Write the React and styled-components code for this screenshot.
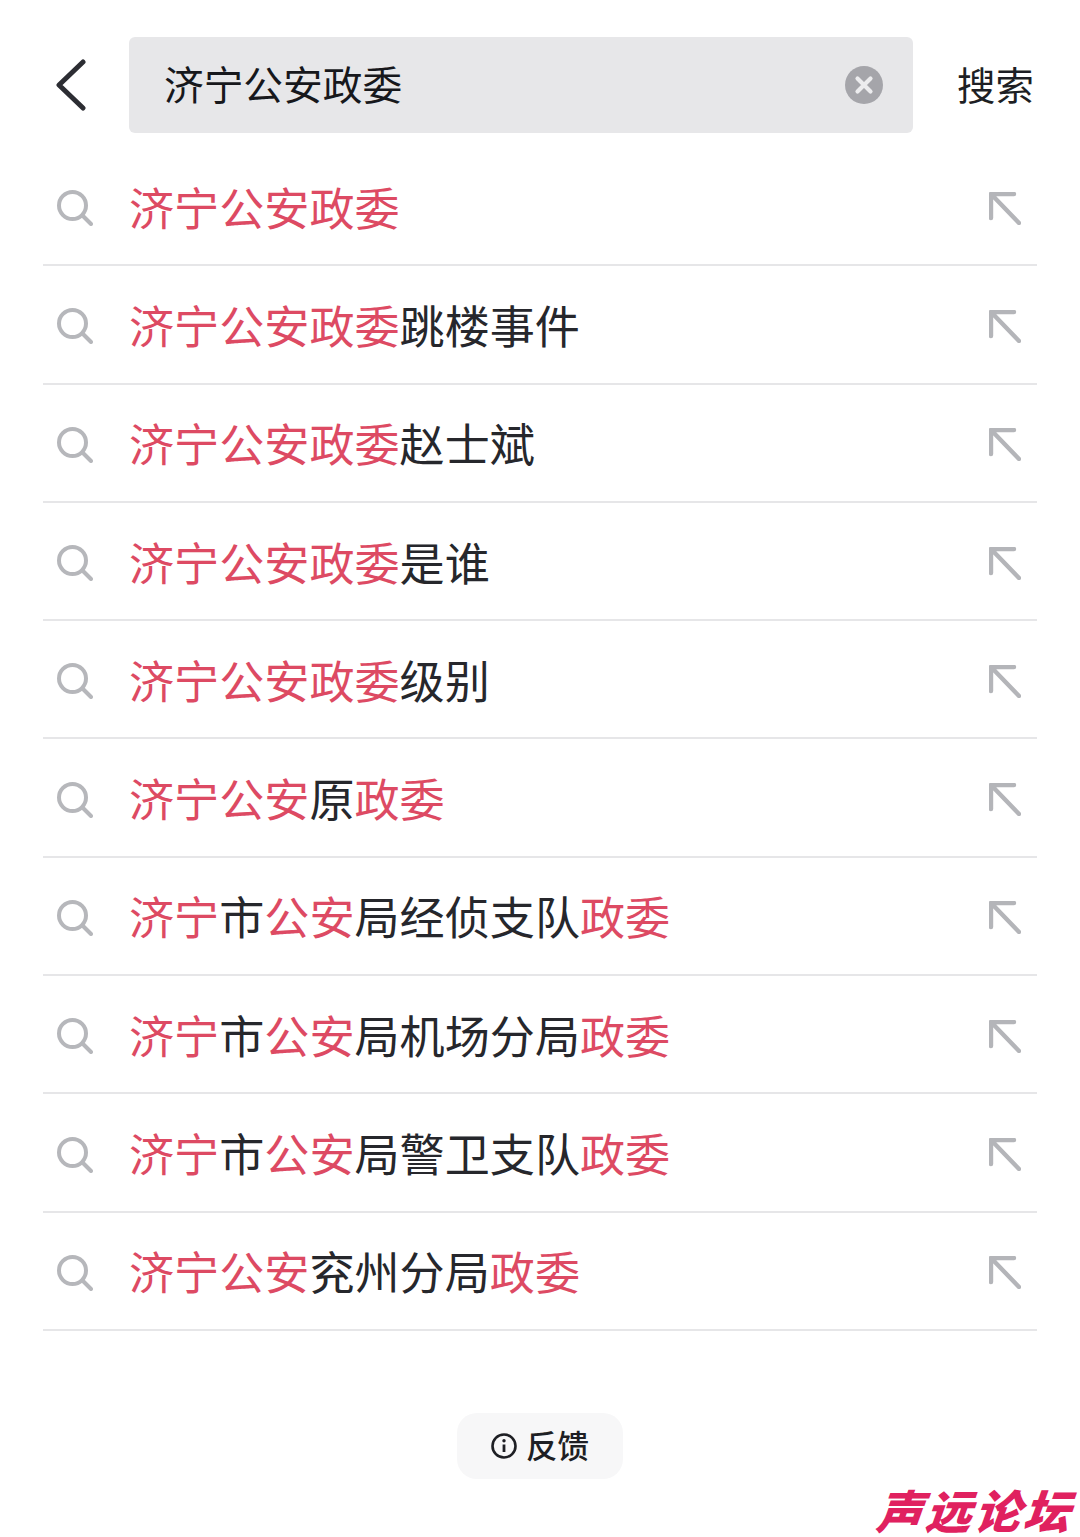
import styled, { createGlobalStyle } from "styled-components"

const rows = [
    [["济宁公安政委", 1]],
    [["济宁公安政委", 1], ["跳楼事件", 0]],
    [["济宁公安政委", 1], ["赵士斌", 0]],
    [["济宁公安政委", 1], ["是谁", 0]],
    [["济宁公安政委", 1], ["级别", 0]],
    [["济宁公安", 1], ["原", 0], ["政委", 1]],
    [["济宁", 1], ["市", 0], ["公安", 1], ["局经侦支队", 0], ["政委", 1]],
    [["济宁", 1], ["市", 0], ["公安", 1], ["局机场分局", 0], ["政委", 1]],
    [["济宁", 1], ["市", 0], ["公安", 1], ["局警卫支队", 0], ["政委", 1]],
    [["济宁公安", 1], ["兖州分局", 0], ["政委", 1]],
]

export default function App() {
    return (
        <Page>
            <GlobalStyle />
            <Header>
                <BackIcon viewBox="0 0 30 52" fill="none">
                    <path d="M27 3 L3 26 L27 49" stroke="#2c2d33" strokeWidth="5" strokeLinecap="round" strokeLinejoin="round" />
                </BackIcon>
                <SearchBox>
                    <Query>济宁公安政委</Query>
                    <ClearIcon viewBox="0 0 38 38">
                        <circle cx="19" cy="19" r="19" fill="#a5a5aa" />
                        <path d="M12.5 12.5 L25.5 25.5 M25.5 12.5 L12.5 25.5" stroke="#ececee" strokeWidth="4.2" strokeLinecap="round" />
                    </ClearIcon>
                </SearchBox>
                <SearchLabel>搜索</SearchLabel>
            </Header>
            <List>
                {rows.map((parts, i) => (
                    <Row key={i}>
                        <SearchIcon viewBox="0 0 36 36" fill="none">
                            <circle cx="15.5" cy="15.5" r="13.5" stroke="#b6b7bb" strokeWidth="4" />
                            <path d="M26 26 L34 34" stroke="#b6b7bb" strokeWidth="4" strokeLinecap="round" />
                        </SearchIcon>
                        <RowText>
                            {parts.map(([text, hit], j) => (
                                <Part key={j} $hit={hit}>{text}</Part>
                            ))}
                        </RowText>
                        <FillIcon viewBox="0 0 32 33" fill="none">
                            <path d="M2 26 L2 2 L25 2 M3 3 L30 31" stroke="#b4b5b9" strokeWidth="4.4" strokeLinecap="round" strokeLinejoin="round" />
                        </FillIcon>
                    </Row>
                ))}
            </List>
            <FeedbackWrap>
                <Feedback>
                    <InfoIcon viewBox="0 0 26 26" fill="none">
                        <circle cx="13" cy="13" r="11.5" stroke="#1e1f24" strokeWidth="2.6" />
                        <path d="M13 11.5 L13 19" stroke="#1e1f24" strokeWidth="2.8" />
                        <circle cx="13" cy="7.8" r="1.7" fill="#1e1f24" />
                    </InfoIcon>
                    <FeedbackText>反馈</FeedbackText>
                </Feedback>
            </FeedbackWrap>
            <Watermark>声远论坛</Watermark>
        </Page>
    )
}

const GlobalStyle = createGlobalStyle`
    html, body {
        margin: 0;
        padding: 0;
        background: white;
    }
`

const cjk = `"Noto Sans CJK SC", "Noto Sans", sans-serif`

const Page = styled.div`
    position: relative;
    width: 1080px;
    height: 1537px;
    overflow: hidden;
    background: white;
    font-family: ${cjk};
`

const Header = styled.div`
    display: flex;
    align-items: center;
    height: 96px;
    padding: 37px 47px 0 56px;
`

const BackIcon = styled.svg`
    width: 30px;
    height: 52px;
    flex: none;
    margin-right: 43px;
`

const SearchBox = styled.div`
    flex: 1;
    height: 96px;
    display: flex;
    align-items: center;
    justify-content: space-between;
    padding: 0 30px 0 35px;
    box-sizing: border-box;
    background: #e7e7e9;
    border-radius: 6px;
`

const Query = styled.div`
    font-size: 39.7px;
    color: #17181c;
    line-height: 92px;
    height: 96px;
`

const ClearIcon = styled.svg`
    width: 38px;
    height: 38px;
`

const SearchLabel = styled.div`
    font-size: 38.4px;
    color: #1e1f24;
    margin-left: 44px;
    width: 76px;
    height: 96px;
    line-height: 92px;
    white-space: nowrap;
`

const List = styled.div`
    margin: 15px 43px 0;
`

const Row = styled.div`
    display: flex;
    align-items: center;
    height: 116.3px;
    border-bottom: 2px solid #e6e6e8;
    padding: 0 16px 0 14px;
`

const SearchIcon = styled.svg`
    width: 36px;
    height: 36px;
    flex: none;
    margin: 4px 36px 0 0;
`

const RowText = styled.div`
    flex: 1;
    font-size: 45.1px;
    white-space: nowrap;
`

const Part = styled.span`
    color: ${p => (p.$hit ? "#dd4a63" : "#26272c")};
`

const FillIcon = styled.svg`
    width: 32px;
    height: 33px;
    flex: none;
    margin-top: 4px;
`

const FeedbackWrap = styled.div`
    display: flex;
    justify-content: center;
    margin-top: 82px;
`

const Feedback = styled.div`
    display: flex;
    align-items: center;
    justify-content: center;
    gap: 9px;
    width: 166px;
    height: 66px;
    background: #f7f7f8;
    border-radius: 20px;
`

const InfoIcon = styled.svg`
    width: 26px;
    height: 26px;
    flex: none;
    margin-top: 1px;
`

const FeedbackText = styled.div`
    font-size: 31.5px;
    line-height: 62px;
    height: 66px;
    color: #1e1f24;
    font-weight: 500;
`

const Watermark = styled.div`
    position: absolute;
    left: 877px;
    bottom: 4px;
    font-size: 46px;
    line-height: 48px;
    font-weight: 900;
    font-style: italic;
    letter-spacing: 3px;
    color: #e0215f;
    white-space: nowrap;
    transform: skewX(-6deg);
`
